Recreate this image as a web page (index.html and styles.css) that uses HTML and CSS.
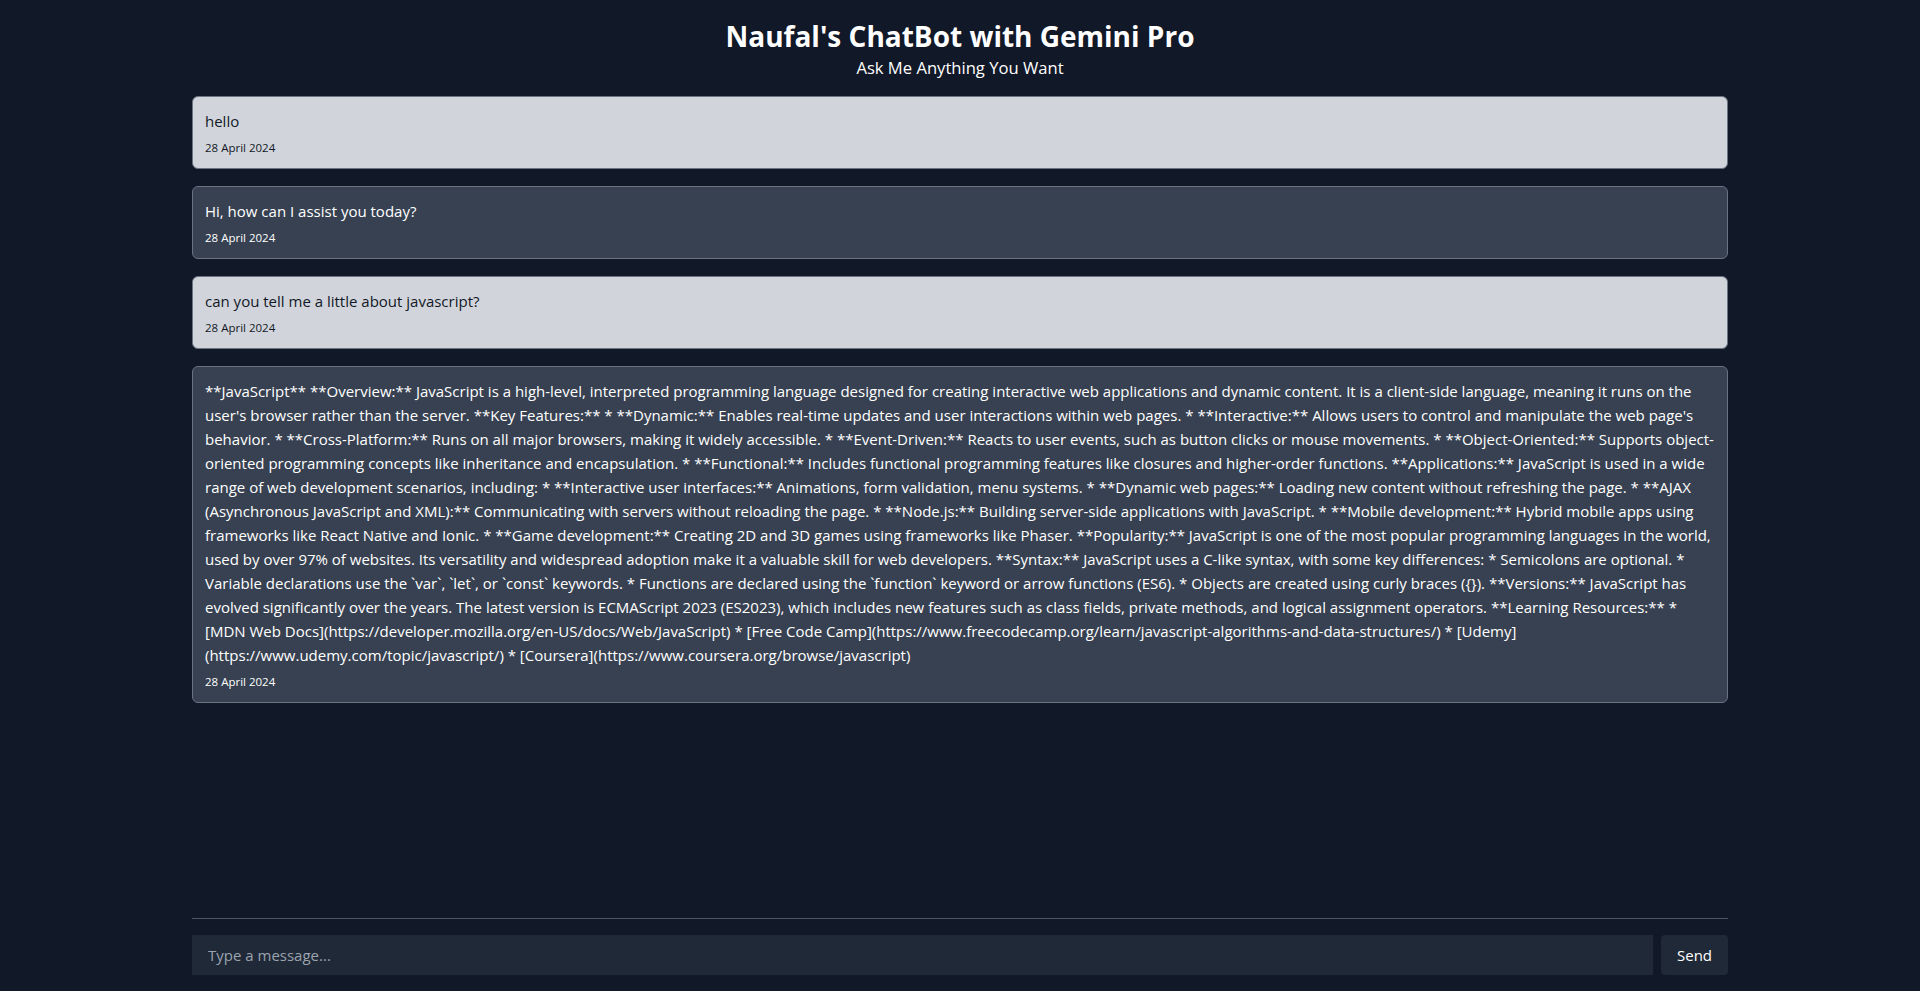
FILE: index.html
```html
<!DOCTYPE html>
<html lang="en">
<head>
<meta charset="utf-8">
<title>Naufal's ChatBot with Gemini Pro</title>
<link rel="stylesheet" href="styles.css">
</head>
<body>
<div class="app">
  <header class="header">
    <h1 class="title">Naufal's ChatBot with Gemini Pro</h1>
    <p class="subtitle">Ask Me Anything You Want</p>
  </header>
  <main class="messages">
    <div class="msg msg-user">
      <p class="msg-text">hello</p>
      <p class="msg-date">28 April 2024</p>
    </div>
    <div class="msg msg-bot">
      <p class="msg-text">Hi, how can I assist you today?</p>
      <p class="msg-date">28 April 2024</p>
    </div>
    <div class="msg msg-user">
      <p class="msg-text">can you tell me a little about javascript?</p>
      <p class="msg-date">28 April 2024</p>
    </div>
    <div class="msg msg-bot">
      <p class="msg-text">**JavaScript** **Overview:** JavaScript is a high-level, interpreted programming language designed for creating interactive web applications and dynamic content. It is a client-side language, meaning it runs on the user's browser rather than the server. **Key Features:** * **Dynamic:** Enables real-time updates and user interactions within web pages. * **Interactive:** Allows users to control and manipulate the web page's behavior. * **Cross-Platform:** Runs on all major browsers, making it widely accessible. * **Event-Driven:** Reacts to user events, such as button clicks or mouse movements. * **Object-Oriented:** Supports object-oriented programming concepts like inheritance and encapsulation. * **Functional:** Includes functional programming features like closures and higher-order functions. **Applications:** JavaScript is used in a wide range of web development scenarios, including: * **Interactive user interfaces:** Animations, form validation, menu systems. * **Dynamic web pages:** Loading new content without refreshing the page. * **AJAX (Asynchronous JavaScript and XML):** Communicating with servers without reloading the page. * **Node.js:** Building server-side applications with JavaScript. * **Mobile development:** Hybrid mobile apps using frameworks like React Native and Ionic. * **Game development:** Creating 2D and 3D games using frameworks like Phaser. **Popularity:** JavaScript is one of the most popular programming languages in the world, used by over 97% of websites. Its versatility and widespread adoption make it a valuable skill for web developers. **Syntax:** JavaScript uses a C-like syntax, with some key differences: * Semicolons are optional. * Variable declarations use the `var`, `let`, or `const` keywords. * Functions are declared using the `function` keyword or arrow functions (ES6). * Objects are created using curly braces ({}). **Versions:** JavaScript has evolved significantly over the years. The latest version is ECMAScript 2023 (ES2023), which includes new features such as class fields, private methods, and logical assignment operators. **Learning Resources:** * [MDN Web Docs](https://developer.mozilla.org/en-US/docs/Web/JavaScript) * [Free Code Camp](https://www.freecodecamp.org/learn/javascript-algorithms-and-data-structures/) * [Udemy](https://www.udemy.com/topic/javascript/) * [Coursera](https://www.coursera.org/browse/javascript)</p>
      <p class="msg-date">28 April 2024</p>
    </div>
  </main>
  <footer class="composer">
    <input class="composer-input" type="text" placeholder="Type a message...">
    <button class="composer-send" type="button">Send</button>
  </footer>
</div>
</body>
</html>
```

FILE: styles.css
```css
* { box-sizing: border-box; }
html, body { margin: 0; padding: 0; height: 100%; }
body {
  background: #111827;
  color: #ffffff;
  font-family: "Open Sans", "Noto Sans", sans-serif;
  font-size: 15px;
}
.app {
  height: 100vh;
  display: flex;
  flex-direction: column;
  width: 1536px;
  margin: 0 auto;
}
.header {
  text-align: center;
  padding-top: 18px;
}
.title {
  margin: 0;
  font-size: 28px;
  line-height: 36px;
  font-weight: 700;
}
.subtitle {
  margin: 0;
  font-size: 16.6px;
  line-height: 28px;
  font-weight: 400;
}
.messages {
  flex: 1;
  display: flex;
  flex-direction: column;
  gap: 17px;
  margin-top: 14px;
}
.msg {
  border-radius: 6px;
  padding: 12px;
  border: 1px solid #6b7280;
}
.msg-user { background: #d1d5db; color: #111827; }
.msg-bot { background: #374151; color: #ffffff; }
.msg-text { margin: 0; line-height: 24px; }
.msg-date { margin: 7px 0 0; font-size: 11.5px; line-height: 16px; }
.composer {
  border-top: 1px solid #4b5563;
  margin-top: 16px;
  padding: 16px 0;
  display: flex;
  gap: 8px;
}
.composer-input {
  flex: 1;
  height: 40px;
  background: #1f2937;
  border: none;
  color: #fff;
  padding: 0 16px;
  font-family: inherit;
  font-size: 15px;
  outline: none;
}
.composer-input::placeholder { color: #9ca3af; }
.composer-send {
  width: 67px;
  height: 40px;
  background: #1f2937;
  border: none;
  border-radius: 4px;
  color: #fff;
  font-family: inherit;
  font-size: 15px;
}
```
